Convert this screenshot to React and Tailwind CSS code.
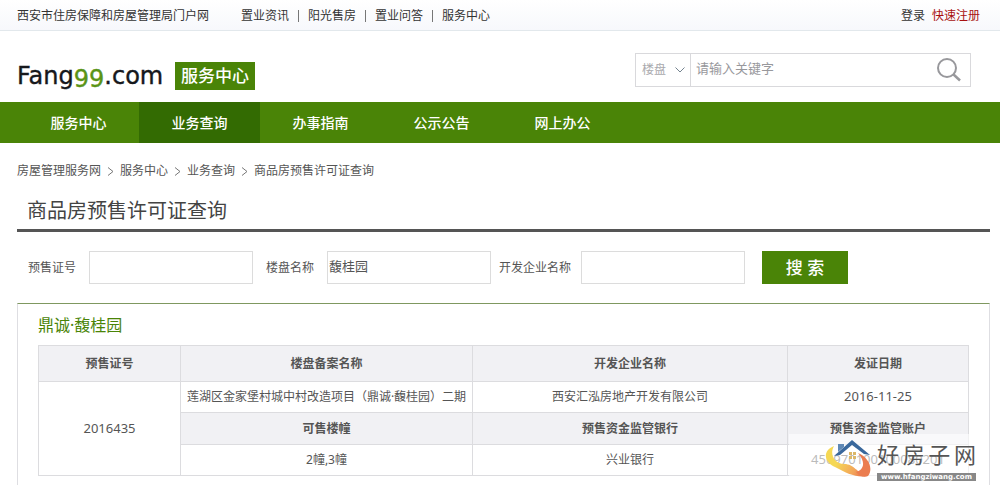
const topLinks = ['置业资讯', '阳光售房', '置业问答', '服务中心'];
const navItems = ['服务中心', '业务查询', '办事指南', '公示公告', '网上办公'];
const crumbs = ['房屋管理服务网', '服务中心', '业务查询', '商品房预售许可证查询'];

function TopBar() {
  return (
    <div className="flex h-[31px] items-center border-b border-[#e2e8ec] bg-linear-to-b from-white to-[#f7f8fc] pt-[2px] pr-5 pl-[17px] text-[#333]">
      <a href="#">西安市住房保障和房屋管理局门户网</a>
      <ul className="ml-8 flex items-center">
        {topLinks.map((link, i) => (
          <li key={link} className="flex items-center">
            {i > 0 && <span className="mx-[9px] h-3 w-px bg-[#777]" />}
            <a href="#">{link}</a>
          </li>
        ))}
      </ul>
      <div className="ml-auto flex gap-[7px]">
        <a href="#">登录</a>
        <a href="#" className="text-[#a81010]">快速注册</a>
      </div>
    </div>
  );
}

function Logo() {
  return (
    <svg className="h-8 w-[148px]" viewBox="0 0 148 32" role="img" aria-label="Fang99.com">
      <text y="24" className="fill-[#16181c] stroke-[#16181c] font-['DejaVu_Sans',sans-serif] text-[24px]" strokeWidth="0.4">
        <tspan x="0">Fang</tspan>
        <tspan className="fill-[#5a9416] stroke-[#5a9416]" dy="3">99</tspan>
        <tspan dy="-3">.com</tspan>
      </text>
    </svg>
  );
}

function Header() {
  return (
    <header className="flex h-[71px] items-end justify-between pr-[29px] pb-[10px] pl-[17px]">
      <a href="#" className="flex items-center gap-[10px]">
        <Logo />
        <span className="bg-[#4a8407] px-[6px] text-[17px] leading-7 font-medium text-white">服务中心</span>
      </a>
      <form className="mb-[5px] flex h-[34px] w-[336px] items-center border border-[#d9d9dc]">
        <div className="relative flex h-full w-[55px] items-center border-r border-[#d9d9dc]">
          <select aria-label="类型" className="h-full w-full appearance-none pl-[6px] text-[#a9a9ad] outline-none">
            <option>楼盘</option>
          </select>
          <svg className="pointer-events-none absolute right-[5px] h-[6px] w-[10px]" viewBox="0 0 10 6" fill="none" stroke="#74838f">
            <path d="M0.5 0.5 5 5 9.5 0.5" />
          </svg>
        </div>
        <input
          aria-label="关键字"
          placeholder="请输入关键字"
          className="h-full min-w-0 flex-1 pb-1 pl-[5px] text-[13px] outline-none placeholder:text-[#98989c]"
        />
        <button type="submit" aria-label="搜索" className="mr-[9px]">
          <svg className="h-6 w-6" viewBox="0 0 24 24" fill="none" stroke="#98989c" strokeWidth="2">
            <circle cx="10" cy="10" r="9" />
            <path d="M16 16 23 22.5" strokeWidth="2.5" />
          </svg>
        </button>
      </form>
    </header>
  );
}

function Nav() {
  return (
    <nav className="flex h-[41px] bg-[#4a8407] pl-[18px] text-sm font-medium text-white">
      {navItems.map((item) => (
        <a
          key={item}
          href="#"
          className={`flex w-[121px] items-center justify-center ${item === '业务查询' ? 'bg-[#336b02]' : ''}`}
        >
          {item}
        </a>
      ))}
    </nav>
  );
}

function Breadcrumb() {
  return (
    <ol className="mt-[19px] flex items-center leading-[18px] text-[#555]">
      {crumbs.map((crumb, i) => (
        <li key={crumb} className="flex items-center">
          {i > 0 && (
            <svg className="mx-[6px] h-[9px] w-[7px]" viewBox="0 0 7 9" fill="none" stroke="#777">
              <path d="M1 0.5 6 4.5 1 8.5" />
            </svg>
          )}
          <a href="#">{crumb}</a>
        </li>
      ))}
    </ol>
  );
}

function Field({ id, label, value, gap = 'gap-[13px]' }) {
  return (
    <div className={`flex items-center ${gap}`}>
      <label htmlFor={id}>{label}</label>
      <input
        id={id}
        defaultValue={value}
        className="h-[33px] w-[164px] border border-[#dcdcdc] px-px pb-1 text-[13px] outline-none"
      />
    </div>
  );
}

function SearchForm() {
  return (
    <form className="mt-[19px] flex items-center pl-[11px] text-[#555]">
      <Field id="permit" label="预售证号" />
      <div className="ml-[13px]">
        <Field id="project" label="楼盘名称" value="馥桂园" />
      </div>
      <div className="ml-[8px]">
        <Field id="company" label="开发企业名称" gap="gap-[10px]" />
      </div>
      <button type="submit" className="ml-[17px] h-[33px] w-[86px] bg-[#4a8407] pt-[2px] text-[17px] font-medium text-white">
        搜 索
      </button>
    </form>
  );
}

function PermitTable() {
  return (
    <table className="mt-[9px] w-full table-fixed border-collapse text-center text-[#555] [&_td]:border [&_td]:border-[#dcdcdf] [&_th]:border [&_th]:border-[#dcdcdf] [&_th]:bg-[#f1f1f4]">
      <colgroup>
        <col className="w-[142px]" />
        <col className="w-[292px]" />
        <col className="w-[315px]" />
        <col />
      </colgroup>
      <tbody>
        <tr className="h-9">
          <th>预售证号</th>
          <th>楼盘备案名称</th>
          <th>开发企业名称</th>
          <th>发证日期</th>
        </tr>
        <tr className="h-[31px]">
          <td rowSpan={3} className="text-[13px]">2016435</td>
          <td className="whitespace-nowrap">莲湖区金家堡村城中村改造项目（鼎诚·馥桂园）二期</td>
          <td>西安汇泓房地产开发有限公司</td>
          <td className="text-[13px]">2016-11-25</td>
        </tr>
        <tr className="h-8">
          <th>可售楼幢</th>
          <th>预售资金监管银行</th>
          <th>预售资金监管账户</th>
        </tr>
        <tr className="h-[31px]">
          <td>2幢,3幢</td>
          <td>兴业银行</td>
          <td className="text-[13px]">456970100100080201</td>
        </tr>
      </tbody>
    </table>
  );
}

function Watermark() {
  return (
    <div className="absolute right-[9px] bottom-[3px] flex h-12 w-[191px] items-start gap-[5px] bg-white/60 pr-[4px] pl-[35px]">
      <svg className="mt-[6px] h-10 w-12 shrink-0" viewBox="0 0 48 40" fill="none">
        <defs>
          <linearGradient id="swoosh" x1="4" y1="10" x2="44" y2="36" gradientUnits="userSpaceOnUse">
            <stop offset="0.3" stopColor="#f5d855" />
            <stop offset="0.7" stopColor="#f3a45a" />
            <stop offset="1" stopColor="#e2603f" />
          </linearGradient>
        </defs>
        <path d="M10 6C-2 11 0 22 11 27 22 33 32 38 44 36 32 33 31 24 20 24 11 24 5 15 10 6Z" fill="url(#swoosh)" />
        <path d="M34 13C44 17 50 28 44 36 38 38 35 35 32 32 40 30 42 22 34 13Z" fill="#eb7d50" />
        <path d="M10 16 28 0 46 15 40 14 28 5 16 15Z" fill="#3a689c" />
        <path d="M14 4h6v3l-6 5Z" fill="#5f88b5" />
        <path d="M25 12h3v3h-3Zm4 0h3v3h-3Zm-4 4h3v3h-3Zm4 0h3v3h-3Z" fill="#dcb768" />
      </svg>
      <div className="flex-1">
        <div className="flex h-[39px] items-center justify-between font-['Noto_Sans_CJK_SC',sans-serif] text-[22px] text-[#555]">
          <span>好</span>
          <span>房</span>
          <span>子</span>
          <span>网</span>
        </div>
        <div className="bg-[#888] text-center font-['DejaVu_Sans',sans-serif] text-[7px] leading-[8px] font-bold text-white">
          www.hfangziwang.com
        </div>
      </div>
    </div>
  );
}

export default function App() {
  return (
    <div className="bg-white font-['Noto_Sans','Noto_Sans_CJK_SC',sans-serif] text-xs">
      <TopBar />
      <Header />
      <Nav />
      <main className="pr-[10px] pl-[17px]">
        <Breadcrumb />
        <h1 className="mt-[14px] border-b-[3px] border-[#555] pb-px pl-[10px] text-xl leading-[34px] text-[#444]">
          商品房预售许可证查询
        </h1>
        <SearchForm />
        <section className="relative mt-[19px] border-x border-t border-x-[#dedee2] border-t-[#7f9860] px-5 pt-[10px] pb-[9px]">
          <h2 className="text-base leading-[22px] text-[#4a8407]">鼎诚·馥桂园</h2>
          <PermitTable />
          <Watermark />
        </section>
      </main>
    </div>
  );
}
